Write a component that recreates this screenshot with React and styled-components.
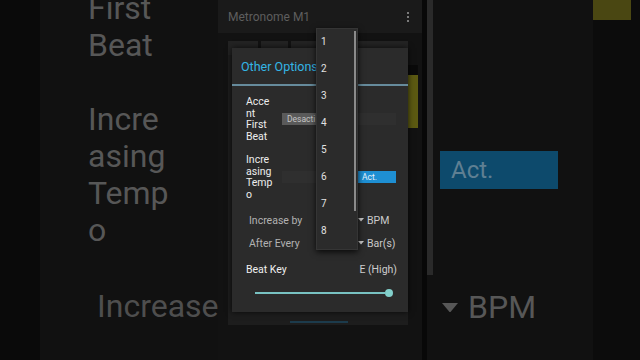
import React from 'react';
import styled, { createGlobalStyle } from 'styled-components';

const Global = createGlobalStyle`
  html, body { margin: 0; padding: 0; background: #0b0b0b; }
  body { font-family: Roboto, "Noto Sans", sans-serif; }
  #root { width: 640px; height: 360px; }
`;

const Screen = styled.div`
  width: 640px;
  height: 360px;
  display: flex;
  overflow: hidden;
  background: #0b0b0b;
  font-family: Roboto, "Noto Sans", sans-serif;
`;

/* ---------- blurred backdrop, left ---------- */
const LeftBackdrop = styled.div`
  width: 218px;
  flex: none;
  display: flex;
`;
const LeftEdge = styled.div`
  width: 40px;
  background: #0a0a0a;
`;
const LeftPanel = styled.div`
  flex: 1;
  background: #111111;
  padding-left: 48px;
  display: flex;
  flex-direction: column;
  overflow: hidden;
`;
const BigText = styled.div`
  font-size: 32px;
  line-height: 37px;
  height: 37px;
  color: ${(p) => p.$color || '#575757'};
  white-space: pre;
  margin-top: ${(p) => p.$mt || 0}px;
  padding-left: ${(p) => p.$indent || 0}px;
`;

/* ---------- blurred backdrop, right ---------- */
const PhoneGap = styled.div`
  width: 5px;
  flex: none;
  background: #080808;
`;
const RightBackdrop = styled.div`
  flex: 1;
  display: flex;
  background: #111111;
`;
const ScrollEdge = styled.div`
  width: 6px;
  height: 275px;
  background: #2a2a2a;
  flex: none;
`;
const RightMain = styled.div`
  width: 160px;
  flex: none;
  padding: 151px 0 0 7px;
  box-sizing: border-box;
`;
const BigAct = styled.div`
  width: 118px;
  height: 38px;
  background: #0d4a6c;
  color: #5f7f92;
  font-size: 24px;
  line-height: 38px;
  padding-left: 11px;
  box-sizing: border-box;
`;
const BigUnit = styled.div`
  margin-top: 100px;
  display: flex;
  align-items: center;
  gap: 10px;
  padding-left: 2px;
  font-size: 32px;
  line-height: 37px;
  color: #575757;
`;
const RightStrip = styled.div`
  flex: 1;
  background: #0c0c0c;
`;
const YellowCorner = styled.div`
  width: 38px;
  height: 20px;
  background: #4a4712;
`;

/* ---------- phone ---------- */
const Phone = styled.div`
  width: 204px;
  flex: none;
  position: relative;
  background: #121212;
  display: flex;
  flex-direction: column;
`;
const AppBar = styled.div`
  height: 33px;
  flex: none;
  background: #1a1a1a;
  display: flex;
  align-items: center;
  justify-content: space-between;
  padding: 0 13px 0 10px;
`;
const AppTitle = styled.div`
  font-size: 12px;
  color: #5e5e5e;
`;
const MenuDots = styled.div`
  display: flex;
  flex-direction: column;
  gap: 2px;
  span {
    width: 2px;
    height: 2px;
    background: #7a7a7a;
    display: block;
  }
`;
const Body = styled.div`
  flex: 1;
  display: flex;
  padding-left: 10px;
`;
const MainPane = styled.div`
  width: 180px;
  display: flex;
  flex-direction: column;
  padding-top: 8px;
`;
const TabRow = styled.div`
  display: flex;
  gap: 3px;
  height: 14px;
`;
const TabBox = styled.div`
  flex: ${(p) => p.$grow};
  background: #232323;
`;
const BackPanel = styled.div`
  height: 270px;
  background: #1d1d1d;
  display: flex;
  align-items: flex-end;
  justify-content: center;
  padding-bottom: 2px;
  box-sizing: border-box;
`;
const BlueLine = styled.div`
  width: 58px;
  height: 2px;
  margin-left: 2px;
  background: #1c3b4c;
`;
const SideCol = styled.div`
  width: 10px;
  padding-top: 32px;
  display: flex;
  flex-direction: column;
`;
const SideCap = styled.div`
  height: 10px;
  background: #0a0a0a;
`;
const SideYellow = styled.div`
  height: 53px;
  background: #5c5a12;
`;

/* ---------- dialog ---------- */
const Dialog = styled.div`
  position: absolute;
  left: 14px;
  top: 48px;
  width: 176px;
  height: 264px;
  background: #2b2b2b;
  box-shadow: 0 0 6px rgba(0, 0, 0, 0.75);
  display: flex;
  flex-direction: column;
`;
const DialogTitle = styled.div`
  height: 36px;
  display: flex;
  align-items: center;
  padding-left: 9px;
  font-size: 12.5px;
  color: #33b5e5;
`;
const Divider = styled.div`
  height: 2px;
  background: #668b9c;
`;
const DialogContent = styled.div`
  padding: 10px 11px 0 14px;
  display: flex;
  flex-direction: column;
`;
const ToggleRow = styled.div`
  display: grid;
  grid-template-columns: 36px 38px 37px 39px;
  align-items: center;
  margin-bottom: ${(p) => p.$mb || 0}px;
`;
const RowLabel = styled.div`
  width: 27.5px;
  font-size: 10.5px;
  line-height: 11.7px;
  color: #ededed;
  overflow-wrap: anywhere;
`;
const toggleColors = {
  off: { bg: '#5a5a5a', fg: '#c4c4c4' },
  dim: { bg: '#2f2f2f', fg: '#2f2f2f' },
  on: { bg: '#1e8fd3', fg: '#e6f3fb' },
};
const ToggleBtn = styled.div`
  grid-column: ${(p) => p.$col};
  height: 12px;
  line-height: 12px;
  font-size: 8.5px;
  padding-left: 5px;
  overflow: hidden;
  white-space: nowrap;
  background: ${(p) => toggleColors[p.$kind].bg};
  color: ${(p) => toggleColors[p.$kind].fg};
`;
const SpinnerRow = styled.div`
  height: 23px;
  display: flex;
  align-items: center;
  margin-top: ${(p) => p.$mt || 0}px;
  font-size: 10.5px;
`;
const SpinnerLabel = styled.div`
  width: 109px;
  padding-left: 3px;
  color: #b2b2b2;
`;
const SpinnerValue = styled.div`
  display: flex;
  align-items: center;
  gap: 3px;
  color: #cacaca;
`;
const KeyRow = styled.div`
  height: 23px;
  margin-top: 3px;
  display: flex;
  align-items: center;
  justify-content: space-between;
  font-size: 10.5px;
`;
const KeyLabel = styled.div`
  color: #f0f0f0;
`;
const KeyValue = styled.div`
  color: #cdcdcd;
`;
const SliderRow = styled.div`
  height: 10px;
  margin-top: 7.5px;
  padding-left: 9px;
  display: flex;
  align-items: center;
`;
const SliderTrack = styled.div`
  width: 130px;
  height: 2px;
  background: #78c2c2;
`;
const SliderThumb = styled.div`
  width: 8px;
  height: 8px;
  border-radius: 50%;
  background: #82d0cb;
`;

/* ---------- dropdown ---------- */
const Dropdown = styled.div`
  position: absolute;
  left: 98px;
  top: 28px;
  width: 42px;
  height: 222px;
  box-sizing: border-box;
  background: #2b2b2b;
  border: 1px solid #353535;
  box-shadow: 0 2px 6px rgba(0, 0, 0, 0.8);
  z-index: 2;
  overflow: hidden;
`;
const DropItem = styled.div`
  height: 27px;
  line-height: 26px;
  padding-left: 4px;
  font-size: 10px;
  color: #e2e2e2;
`;
const DropScroll = styled.div`
  position: absolute;
  right: 1px;
  top: 2px;
  width: 2px;
  height: 180px;
  background: #8a8a8a;
`;

const Caret = ({ size = 6, color = '#cacaca' }) => (
  <svg width={size} height={size * 0.6} viewBox="0 0 10 6">
    <path d="M0 0 L10 0 L5 6 Z" fill={color} />
  </svg>
);

export default function App() {
  return (
    <>
      <Global />
      <Screen>
        <LeftBackdrop>
          <LeftEdge />
          <LeftPanel>
            <BigText $mt={-10}>First</BigText>
            <BigText>Beat</BigText>
            <BigText> </BigText>
            <BigText>Incre</BigText>
            <BigText>asing</BigText>
            <BigText>Temp</BigText>
            <BigText>o</BigText>
            <BigText> </BigText>
            <BigText $mt={2} $indent={9} $color="#4e4e4e">Increase</BigText>
          </LeftPanel>
        </LeftBackdrop>

        <Phone>
          <AppBar>
            <AppTitle>Metronome M1</AppTitle>
            <MenuDots>
              <span />
              <span />
              <span />
            </MenuDots>
          </AppBar>
          <Body>
            <MainPane>
              <TabRow>
                <TabBox $grow={30} />
                <TabBox $grow={28} />
                <TabBox $grow={60} />
                <TabBox $grow={55} />
              </TabRow>
              <BackPanel>
                <BlueLine />
              </BackPanel>
            </MainPane>
            <SideCol>
              <SideCap />
              <SideYellow />
            </SideCol>
          </Body>

          <Dialog>
            <DialogTitle>Other Options</DialogTitle>
            <Divider />
            <DialogContent>
              <ToggleRow $mb={11}>
                <RowLabel>Accent First Beat</RowLabel>
                <ToggleBtn $col={2} $kind="off">Desacti</ToggleBtn>
                <ToggleBtn $col={4} $kind="dim" />
              </ToggleRow>
              <ToggleRow>
                <RowLabel>Increasing Tempo</RowLabel>
                <ToggleBtn $col={2} $kind="dim" />
                <ToggleBtn $col={4} $kind="on">Act.</ToggleBtn>
              </ToggleRow>
              <SpinnerRow $mt={8}>
                <SpinnerLabel>Increase by</SpinnerLabel>
                <SpinnerValue>
                  <Caret />
                  BPM
                </SpinnerValue>
              </SpinnerRow>
              <SpinnerRow>
                <SpinnerLabel>After Every</SpinnerLabel>
                <SpinnerValue>
                  <Caret />
                  Bar(s)
                </SpinnerValue>
              </SpinnerRow>
              <KeyRow>
                <KeyLabel>Beat Key</KeyLabel>
                <KeyValue>E (High)</KeyValue>
              </KeyRow>
              <SliderRow>
                <SliderTrack />
                <SliderThumb />
              </SliderRow>
            </DialogContent>
          </Dialog>

          <Dropdown>
            {[1, 2, 3, 4, 5, 6, 7, 8].map((n) => (
              <DropItem key={n}>{n}</DropItem>
            ))}
            <DropScroll />
          </Dropdown>
        </Phone>

        <PhoneGap />

        <RightBackdrop>
          <ScrollEdge />
          <RightMain>
            <BigAct>Act.</BigAct>
            <BigUnit>
              <Caret size={16} color="#575757" />
              BPM
            </BigUnit>
          </RightMain>
          <RightStrip>
            <YellowCorner />
          </RightStrip>
        </RightBackdrop>
      </Screen>
    </>
  );
}
